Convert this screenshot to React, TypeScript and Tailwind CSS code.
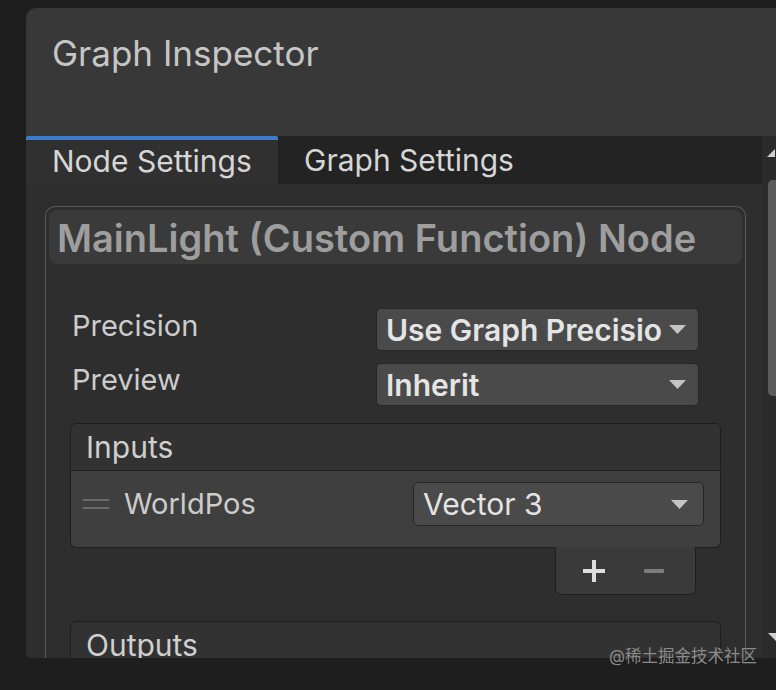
import React from "react";

function Caret() {
  return (
    <svg width="19" height="11" viewBox="0 0 19 11" className="shrink-0">
      <path d="M1 1 L18 1 L9.5 10 Z" fill="#c4c4c4" />
    </svg>
  );
}

function Dropdown({ label, bold, w, h, pr }: { label: string; bold?: boolean; w: string; h: string; pr: string }) {
  return (
    <div
      className={`${w} ${h} ${pr} flex items-center justify-between pl-[9px] rounded-[5px] bg-[#4a4a4a] border border-[#262626] text-[#e4e4e4] text-[30px] ${
        bold ? "font-semibold" : "font-normal"
      }`}
    >
      <span className="whitespace-nowrap leading-none">{label}</span>
      <Caret />
    </div>
  );
}

function ListBox({ title, children }: { title: string; children?: React.ReactNode }) {
  return (
    <div className="w-[651px] flex flex-col">
      <div className="h-[48px] flex items-center pl-[15px] rounded-t-[6px] bg-[#323232] border border-[#1e1e1e] text-[30px] text-[#cfcfcf]">
        {title}
      </div>
      {children}
    </div>
  );
}

export default function App() {
  return (
    <div
      className="relative w-[776px] h-[690px] bg-[#1e1e1e] pt-2 pl-[26px] overflow-hidden"
      style={{ fontFamily: "Inter, 'Noto Sans', sans-serif" }}
    >
      <div className="w-[750px] h-[650px] rounded-tl-[10px] rounded-bl-[6px] bg-[#383838] overflow-hidden flex flex-col">
        {/* title */}
        <div className="h-[128px] shrink-0 pl-[26px] pt-[28px] text-[35px] leading-none text-[#c6c6c6]">
          Graph Inspector
        </div>

        <div className="flex flex-1 min-h-0">
          <div className="flex flex-col w-[736px]">
            {/* tabs */}
            <div className="h-[48px] shrink-0 flex bg-[#232323]">
              <div className="w-[252px] flex flex-col bg-[#303030]">
                <div className="h-[4px] shrink-0 rounded-t-[2px] bg-[#3b7bd0]" />
                <div className="flex-1 flex items-center pl-[26px] pb-[2px] text-[30px] leading-none text-[#d6d6d6]">
                  Node Settings
                </div>
              </div>
              <div className="flex items-center pl-[26px] text-[30px] leading-none text-[#d6d6d6]">Graph Settings</div>
            </div>

            {/* content */}
            <div className="flex-1 bg-[#2e2e2e] pl-[19px] pt-[22px]">
              <div className="w-[701px] h-[460px] rounded-t-[10px] border border-b-0 border-[#5a5a5a] p-[3px]">
                <div className="h-[54px] rounded-[8px] bg-[#3a3a3a] pl-[8px] pt-[2px] flex items-center text-[38px] font-semibold text-[#9e9e9e] whitespace-nowrap">
                  MainLight (Custom Function) Node
                </div>

                <div className="flex flex-col gap-[12px] mt-[44px] pl-[23px]">
                  <div className="flex items-center justify-between pr-[43px]">
                    <span className="text-[29px] text-[#cccccc] -mt-[8px]">Precision</span>
                    <Dropdown label="Use Graph Precisio" bold w="w-[323px]" h="h-[43px]" pr="pr-[11px]" />
                  </div>
                  <div className="flex items-center justify-between pr-[43px]">
                    <span className="text-[29px] text-[#cccccc] -mt-[10px]">Preview</span>
                    <Dropdown label="Inherit" bold w="w-[323px]" h="h-[43px]" pr="pr-[11px]" />
                  </div>
                </div>

                <div className="flex flex-col mt-[17px] pl-[21px]">
                  <ListBox title="Inputs">
                    <div className="h-[77px] flex items-start pt-[11px] pl-[12px] pr-[16px] rounded-b-[6px] bg-[#3f3f3f] border border-t-0 border-[#1e1e1e]">
                      <div className="h-[43px] flex items-center">
                        <div className="flex flex-col gap-[6px] w-[26px]">
                          <div className="h-[2px] bg-[#6a6a6a]" />
                          <div className="h-[2px] bg-[#6a6a6a]" />
                        </div>
                        <span className="ml-[15px] text-[29px] text-[#cccccc]">WorldPos</span>
                      </div>
                      <div className="ml-auto">
                        <Dropdown label="Vector 3" w="w-[291px]" h="h-[44px]" pr="pr-[14px]" />
                      </div>
                    </div>
                    <div className="self-end mr-[25px] w-[141px] h-[48px] -mt-px rounded-b-[6px] bg-[#3a3a3a] border border-t-0 border-[#1e1e1e] flex items-center pl-[26px] gap-[38px]">
                      <svg width="24" height="24" viewBox="0 0 24 24">
                        <path d="M12 1 V23 M1 12 H23" stroke="#dedede" strokeWidth="4" />
                      </svg>
                      <svg width="20" height="4" viewBox="0 0 20 4">
                        <rect x="0" y="0" width="20" height="4" rx="1" fill="#7c7c7c" />
                      </svg>
                    </div>
                  </ListBox>

                  <div className="mt-[26px]">
                    <ListBox title="Outputs" />
                  </div>
                </div>
              </div>
            </div>
          </div>

          {/* scrollbar */}
          <div className="w-[14px] bg-[#2b2b2b] flex flex-col items-end">
            <svg width="10" height="10" viewBox="0 0 10 10" className="mt-[12px]">
              <path d="M9 1 L9 9 L1 9 Z" fill="#d0d0d0" />
            </svg>
            <div className="mt-[22px] w-[8px] h-[216px] rounded-l-[5px] bg-[#5c5c5c]" />
            <svg width="8" height="10" viewBox="0 0 8 10" className="mt-auto mb-[16px]">
              <path d="M0 1 L8 1 L8 9 Z" fill="#d0d0d0" />
            </svg>
          </div>
        </div>
      </div>

      <div
        className="absolute left-[609px] top-[648px] text-[16.5px] leading-none text-[#8a8a8a]"
        style={{ fontFamily: "Inter, 'Noto Sans CJK SC', sans-serif" }}
      >
        @稀土掘金技术社区
      </div>
    </div>
  );
}
